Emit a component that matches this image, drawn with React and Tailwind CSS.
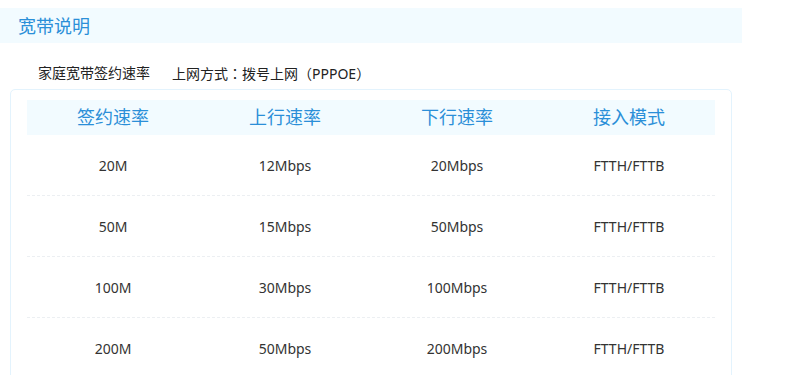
const rows = [
    {plan: "20M", up: "12Mbps", down: "20Mbps", mode: "FTTH/FTTB"},
    {plan: "50M", up: "15Mbps", down: "50Mbps", mode: "FTTH/FTTB"},
    {plan: "100M", up: "30Mbps", down: "100Mbps", mode: "FTTH/FTTB"},
    {plan: "200M", up: "50Mbps", down: "200Mbps", mode: "FTTH/FTTB"},
]

export default function App() {
    return (
        <div className="w-[786px] h-[375px] overflow-hidden bg-white pt-2 font-['Noto_Sans','Noto_Sans_CJK_SC',sans-serif]">
            <div className="w-[742px] h-[35px] bg-[#f2fbff] flex items-center pl-[18px]">
                <h2 className="text-[18px] text-[#2b8fd8] leading-none">宽带说明</h2>
            </div>

            <div className="flex items-center h-4 gap-[22px] pl-[38px] mt-[22px] text-[14px] text-[#222] leading-4">
                <span>家庭宽带签约速率</span>
                <span>上网方式<span className="font-['Noto_Sans_CJK_JP']">：</span>拨号上网<span className="font-['Noto_Sans_CJK_JP']">（</span>PPPOE<span className="font-['Noto_Sans_CJK_JP']">）</span></span>
            </div>

            <div className="ml-[10px] mt-[8px] w-[722px] h-[300px] border border-[#e3f3fd] rounded-[5px] px-4 pt-[10px]">
                <div className="grid grid-cols-4 h-[35px] bg-[#f2fbff] items-center text-center text-[18px] text-[#2b8fd8]">
                    <span>签约速率</span>
                    <span>上行速率</span>
                    <span>下行速率</span>
                    <span>接入模式</span>
                </div>
                {rows.map((r, i) => (
                    <div
                        key={r.plan}
                        className={"grid grid-cols-4 h-[61px] items-center text-center text-[14px] text-[#333] " +
                            (i < rows.length - 1 ? "border-b border-dashed border-[#eceff2]" : "")}
                    >
                        <span>{r.plan}</span>
                        <span>{r.up}</span>
                        <span>{r.down}</span>
                        <span>{r.mode}</span>
                    </div>
                ))}
            </div>
        </div>
    )
}
